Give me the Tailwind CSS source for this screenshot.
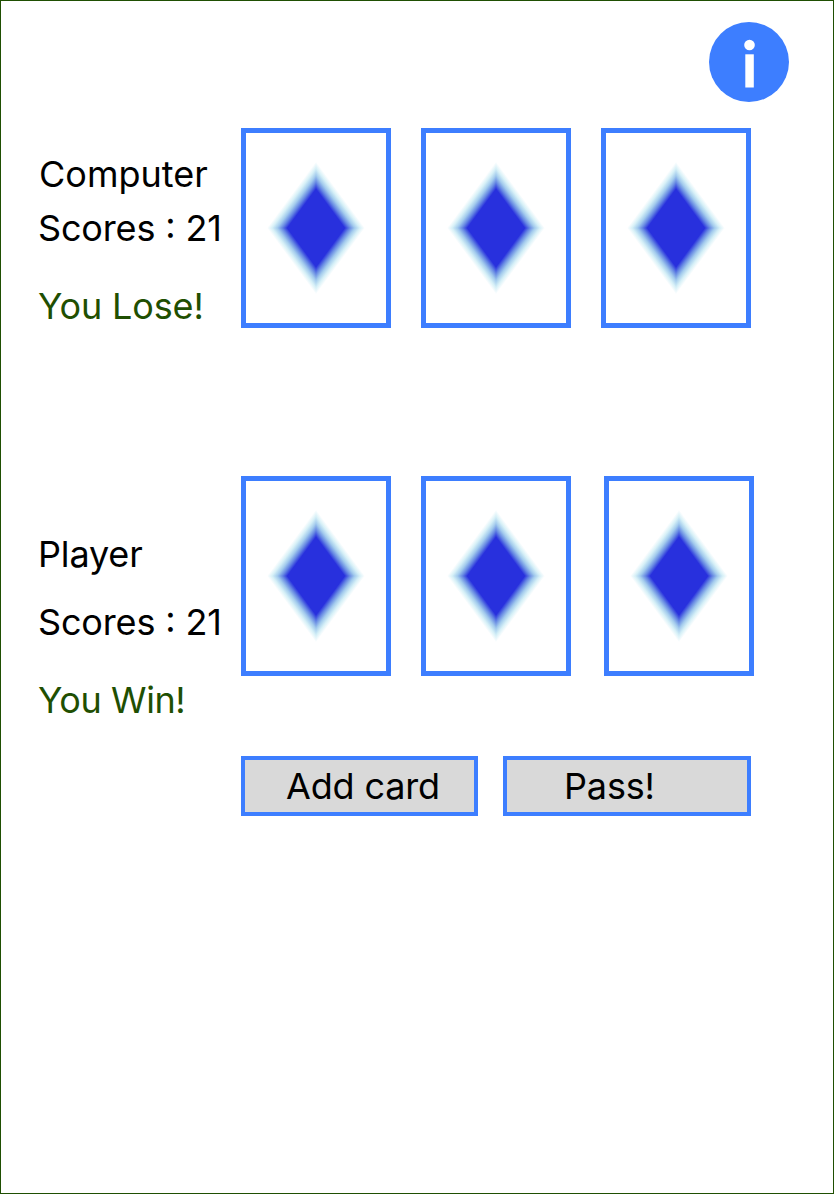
<!DOCTYPE html>
<html lang="en">
<head>
<meta charset="utf-8">
<title>Card game</title>
<script src="https://cdn.jsdelivr.net/npm/@tailwindcss/browser@4"></script>
</head>
<body class="bg-white">
<svg width="0" height="0" class="absolute">
  <defs>
    <linearGradient id="glow" gradientUnits="userSpaceOnUse" x1="0" y1="0" x2="0.5" y2="0.5">
      <stop offset="0.41" stop-color="#2830dd"/>
      <stop offset="0.4825" stop-color="#6688e3"/>
      <stop offset="0.555" stop-color="#a3cbed"/>
      <stop offset="0.6275" stop-color="#d6f0f7"/>
      <stop offset="0.70" stop-color="#ffffff"/>
    </linearGradient>
    <symbol id="diamond" viewBox="-70 -95 140 190">
      <rect width="1" height="1" transform="scale(70 95)" fill="url(#glow)"/>
      <rect width="1" height="1" transform="scale(-70 95)" fill="url(#glow)"/>
      <rect width="1" height="1" transform="scale(70 -95)" fill="url(#glow)"/>
      <rect width="1" height="1" transform="scale(-70 -95)" fill="url(#glow)"/>
    </symbol>
  </defs>
</svg>
<main class="flex h-[1194px] w-[834px] flex-col border border-[#1f4f02] font-['Inter',sans-serif] text-[36px] leading-[44px] tracking-[-0.15px] text-black">
  <header class="flex justify-end pt-[21px] pr-11">
    <button class="size-20" aria-label="Info">
      <svg viewBox="0 0 80 80" class="size-20"><circle cx="40" cy="40" r="40" fill="#3d7eff"/><circle cx="40.5" cy="23" r="5.3" fill="#fff"/><rect x="36.3" y="32.3" width="8.5" height="33.2" fill="#fff"/></svg>
    </button>
  </header>
  <section class="mt-[26px] flex h-[200px] pl-[37px]">
    <div class="w-[203px] shrink-0 whitespace-nowrap pt-6">
      <p class="pl-px tracking-normal">Computer</p>
      <p class="mt-2.5">Scores <span class="[font-feature-settings:'case']">:</span> 21</p>
      <p class="mt-[34px] text-[#1f4f02]">You Lose!</p>
    </div>
    <div class="flex gap-[30px]">
      <div class="h-[200px] w-[150px] border-5 border-[#3d7eff]"><svg class="h-[190px] w-[140px]"><use href="#diamond"/></svg></div>
      <div class="h-[200px] w-[150px] border-5 border-[#3d7eff]"><svg class="h-[190px] w-[140px]"><use href="#diamond"/></svg></div>
      <div class="h-[200px] w-[150px] border-5 border-[#3d7eff]"><svg class="h-[190px] w-[140px]"><use href="#diamond"/></svg></div>
    </div>
  </section>
  <section class="mt-[148px] flex h-[280px] pl-[37px]">
    <div class="w-[203px] shrink-0 whitespace-nowrap pt-14">
      <p>Player</p>
      <p class="mt-6">Scores <span class="[font-feature-settings:'case']">:</span> 21</p>
      <p class="mt-[34px] tracking-[-0.4px] text-[#1f4f02]">You Win!</p>
    </div>
    <div class="flex gap-[30px]">
      <div class="h-[200px] w-[150px] border-5 border-[#3d7eff]"><svg class="h-[190px] w-[140px]"><use href="#diamond"/></svg></div>
      <div class="h-[200px] w-[150px] border-5 border-[#3d7eff]"><svg class="h-[190px] w-[140px]"><use href="#diamond"/></svg></div>
      <div class="ml-[3px] h-[200px] w-[150px] border-5 border-[#3d7eff]"><svg class="h-[190px] w-[140px]"><use href="#diamond"/></svg></div>
    </div>
  </section>
  <div class="flex gap-[25px] pl-60">
    <button class="h-[60px] w-[237px] border-4 border-[#3d7eff] bg-[#d9d9d9] pl-[41px] text-left">Add card</button>
    <button class="h-[60px] w-[248px] border-4 border-[#3d7eff] bg-[#d9d9d9] pl-[57px] text-left">Pass!</button>
  </div>
</main>
</body>
</html>
